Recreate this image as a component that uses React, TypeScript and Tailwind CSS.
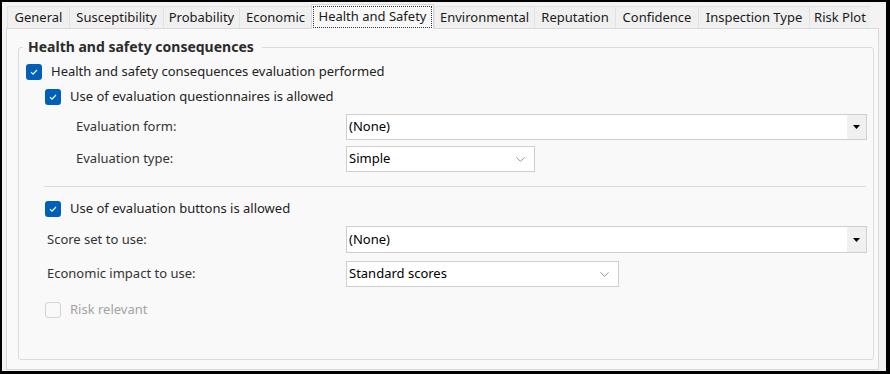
import { ChevronDown } from 'lucide-react';

const tabs = [
  { label: 'General', w: 'w-[62px]' },
  { label: 'Susceptibility', w: 'w-[94px]' },
  { label: 'Probability', w: 'w-[76px]' },
  { label: 'Economic', w: 'w-[72px]' },
  { label: 'Health and Safety', w: 'w-[123px]', active: true },
  { label: 'Environmental', w: 'w-[100px]' },
  { label: 'Reputation', w: 'w-[81px]' },
  { label: 'Confidence', w: 'w-[83px]' },
  { label: 'Inspection Type', w: 'w-[111px]' },
  { label: 'Risk Plot', w: 'w-[61px]' },
];

function CheckBox({ checked = true, disabled = false }: { checked?: boolean; disabled?: boolean }) {
  if (disabled) {
    return <div className="w-[16px] h-[16px] rounded-[3px] border border-[#d4d4d4] bg-[#f9f9f9] shrink-0" />;
  }
  return (
    <div className="w-[16px] h-[16px] rounded-[3px] bg-[#005fb8] flex items-center justify-center shrink-0">
      {checked && (
        <svg width="10" height="10" viewBox="0 0 10 10">
          <path d="M2 5.2 L4 7.2 L8 3" fill="none" stroke="#ffffff" strokeWidth="1.1" />
        </svg>
      )}
    </div>
  );
}

function CheckRow({ label, indent, disabled = false, mt }: { label: string; indent: string; disabled?: boolean; mt: string }) {
  return (
    <div className={`flex items-center h-[16px] ${indent} ${mt}`}>
      <CheckBox disabled={disabled} />
      <span className={`ml-[9px] text-[13px] ${disabled ? 'text-[#a3a3a3]' : 'text-[#222]'}`}>{label}</span>
    </div>
  );
}

function EditCombo({ value }: { value: string }) {
  return (
    <div className="w-[521px] h-full bg-white border border-[#cfcfcf] flex items-center">
      <span className="flex-1 pl-[2px] text-[13px] text-black">{value}</span>
      <div className="w-[19px] h-full bg-[#f0f0f0] flex items-center justify-center">
        <svg width="7" height="4" viewBox="0 0 7 4">
          <path d="M0 0 H7 L3.5 4 Z" fill="#000" />
        </svg>
      </div>
    </div>
  );
}

function ListCombo({ value, w }: { value: string; w: string }) {
  return (
    <div className={`${w} h-full bg-white border border-[#cfcfcf] flex items-center pr-[6px]`}>
      <span className="flex-1 pl-[2px] text-[13px] text-black">{value}</span>
      <ChevronDown className="w-[15px] h-[15px] text-[#7a7a7a]" strokeWidth={1.3} />
    </div>
  );
}

export default function App() {
  return (
    <div
      className="w-[890px] h-[374px] bg-black pt-[2px] pl-[2px] pr-[4px] pb-[3px] overflow-hidden"
      style={{ fontFamily: '"Noto Sans", "Open Sans", sans-serif' }}
    >
      <div className="w-full h-full bg-[#f3f3f3] flex flex-col">
        {/* tab strip */}
        <div className="flex items-end h-[26px] pl-[5px] relative z-10">
          {tabs.map((t) =>
            t.active ? (
              <div
                key={t.label}
                className={`${t.w} h-[25px] -mb-[1px] bg-[#f9f9f9] border border-b-0 border-[#d9d9d9] flex items-start justify-center pt-[1px] px-[1px]`}
              >
                <span className="w-full h-[22px] border border-dotted border-[#333] flex items-center justify-center text-[13px] text-[#1a1a1a]">
                  {t.label}
                </span>
              </div>
            ) : (
              <div
                key={t.label}
                className={`${t.w} h-[22px] bg-[#f0f0f0] border border-b-0 border-r-0 border-[#e2e2e2] flex items-center justify-center text-[13px] text-[#1a1a1a]`}
              >
                {t.label}
              </div>
            )
          )}
        </div>

        {/* tab page */}
        <div className="ml-[4px] w-[873px] h-[342px] bg-[#f9f9f9] border border-[#d9d9d9] pt-[9px] pl-[11px]">
          <fieldset className="w-[856px] h-[322px] border border-[#d8dde3] rounded-[3px]">
            <legend className="ml-[4px] pl-[5px] pr-[8px] text-[14px] leading-[18px] font-bold text-[#2b2b2b]">
              Health and safety consequences
            </legend>
            <div className="flex flex-col">
              <CheckRow label="Health and safety consequences evaluation performed" indent="pl-[7px]" mt="mt-[8px]" />
              <CheckRow label="Use of evaluation questionnaires is allowed" indent="pl-[26px]" mt="mt-[9px]" />

              <div className="flex items-center h-[26px] mt-[9px]">
                <span className="pl-[57px] w-[327px] text-[13px] text-[#333]">Evaluation form:</span>
                <EditCombo value="(None)" />
              </div>
              <div className="flex items-center h-[26px] mt-[6px]">
                <span className="pl-[57px] w-[327px] text-[13px] text-[#333]">Evaluation type:</span>
                <ListCombo value="Simple" w="w-[189px]" />
              </div>

              <div className="ml-[25px] w-[822px] h-[1px] bg-[#dcdcdc] mt-[14px]" />

              <CheckRow label="Use of evaluation buttons is allowed" indent="pl-[26px]" mt="mt-[14px]" />

              <div className="flex items-center h-[27px] mt-[9px]">
                <span className="pl-[28px] w-[327px] text-[13px] text-[#333]">Score set to use:</span>
                <EditCombo value="(None)" />
              </div>
              <div className="flex items-center h-[26px] mt-[8px]">
                <span className="pl-[28px] w-[327px] text-[13px] text-[#333]">Economic impact to use:</span>
                <ListCombo value="Standard scores" w="w-[273px]" />
              </div>

              <CheckRow label="Risk relevant" indent="pl-[26px]" disabled mt="mt-[15px]" />
            </div>
          </fieldset>
        </div>
      </div>
    </div>
  );
}
